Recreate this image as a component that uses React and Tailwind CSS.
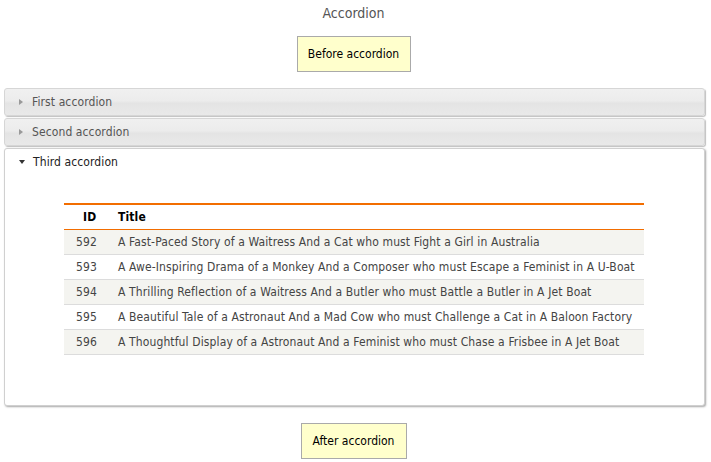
import React from "react";

const films = [
  { id: 592, title: "A Fast-Paced Story of a Waitress And a Cat who must Fight a Girl in Australia" },
  { id: 593, title: "A Awe-Inspiring Drama of a Monkey And a Composer who must Escape a Feminist in A U-Boat" },
  { id: 594, title: "A Thrilling Reflection of a Waitress And a Butler who must Battle a Butler in A Jet Boat" },
  { id: 595, title: "A Beautiful Tale of a Astronaut And a Mad Cow who must Challenge a Cat in A Baloon Factory" },
  { id: 596, title: "A Thoughtful Display of a Astronaut And a Feminist who must Chase a Frisbee in A Jet Boat" },
];

function Header({ label, open }) {
  return (
    <div
      className={
        "flex items-center h-[26px] pl-[14px] text-[12px] tracking-[0.1px] " +
        (open ? "text-[#222]" : "text-[#555]")
      }
    >
      {open ? (
        <span className="w-0 h-0 border-l-[3.5px] border-r-[3.5px] border-t-[4px] border-l-transparent border-r-transparent border-t-[#333] mr-[8px]" />
      ) : (
        <span className="w-0 h-0 border-t-[3.5px] border-b-[3.5px] border-l-[4px] border-t-transparent border-b-transparent border-l-[#999] mr-[9px]" />
      )}
      {label}
    </div>
  );
}

function ClosedPanel({ label }) {
  return (
    <div className="rounded-[3px] border border-[#d6d6d6] bg-[linear-gradient(#f0f0f0,#ececec_45%,#e4e4e4_55%,#e9e9e9)] shadow-[1px_1px_1px_rgba(0,0,0,0.25)]">
      <Header label={label} />
    </div>
  );
}

export default function App() {
  return (
    <div className="w-[711px] h-[462px] bg-white font-['DejaVu_Sans_Condensed','DejaVu_Sans',sans-serif] overflow-hidden">
      <div className="text-center text-[14px] text-[#555] pt-[4px] leading-[18px] mr-[4px]">Accordion</div>
      <div className="flex justify-center mt-[14px] mr-[4px]">
        <button className="w-[114px] h-[36px] bg-[#ffffcc] border border-[#aaa] text-[12px] text-black">
          Before accordion
        </button>
      </div>

      <div className="flex flex-col gap-[2px] mx-[4px] mt-[16px] w-[701px]">
        <ClosedPanel label="First accordion" />
        <ClosedPanel label="Second accordion" />
        <div className="rounded-[3px] border border-[#d0d0d0] bg-white shadow-[1px_1px_2px_rgba(0,0,0,0.35)] h-[258px]">
          <Header label="Third accordion" open />
          <div className="px-[59px] pt-[28px]">
            <table className="w-[580px] border-t-2 border-[#f26d00] text-[12px] tracking-[0.12px] border-collapse">
              <thead>
                <tr className="h-[25px] border-b border-[#f26d00]">
                  <th className="w-[44px] text-left pl-[19px] font-bold text-black">ID</th>
                  <th className="text-left pl-[10px] font-bold text-black">Title</th>
                </tr>
              </thead>
              <tbody>
                {films.map((f, i) => (
                  <tr
                    key={f.id}
                    className={
                      "h-[25px] border-b border-[#dcdcdc] text-[#444] " +
                      (i % 2 === 0 ? "bg-[#f4f4f0]" : "bg-white")
                    }
                  >
                    <td className="pl-[12px]">{f.id}</td>
                    <td className="pl-[10px] whitespace-nowrap">{f.title}</td>
                  </tr>
                ))}
              </tbody>
            </table>
          </div>
        </div>
      </div>

      <div className="flex justify-center mt-[17px] mr-[4px]">
        <button className="w-[106px] h-[36px] bg-[#ffffcc] border border-[#aaa] text-[12px] text-black">
          After accordion
        </button>
      </div>
    </div>
  );
}
